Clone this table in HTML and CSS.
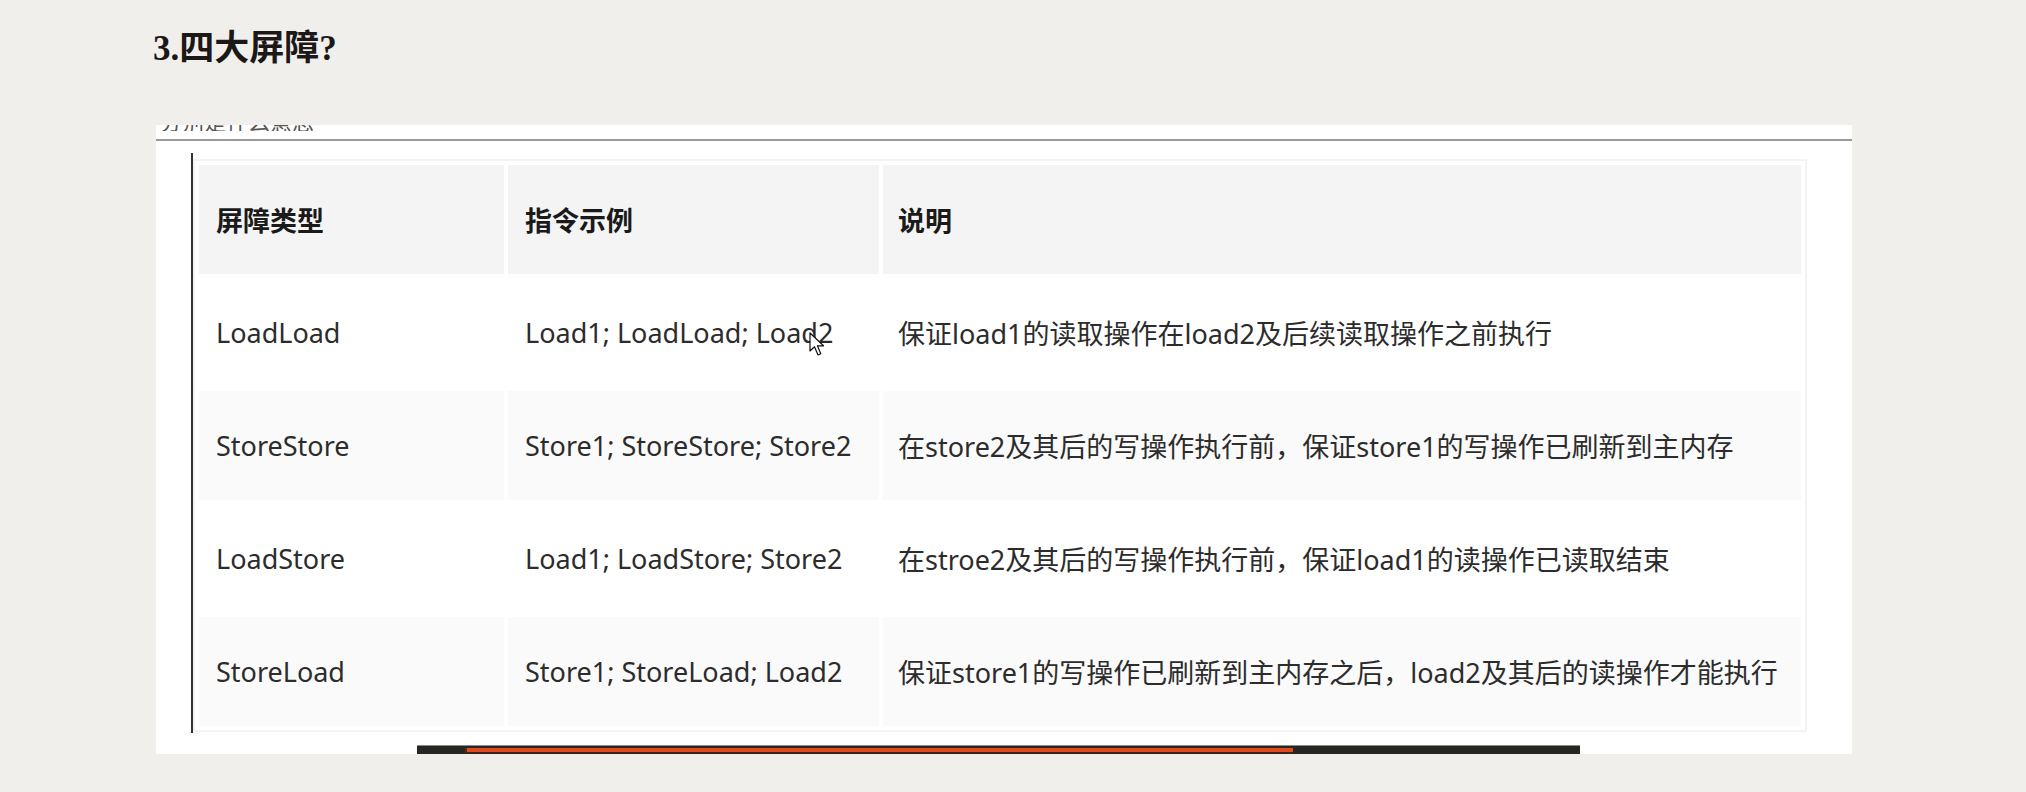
FILE: index.html
```html
<!DOCTYPE html>
<html>
<head>
    <meta charset="utf-8">
    <title>四大屏障</title>
    <link rel="stylesheet" href="styles.css">
</head>
<body>
    <h3 class="section-title">3.四大屏障?</h3>

    <div class="shot">
        <div class="cut-line">
            <span>分别是什么意思</span>
        </div>
        <div class="rule"></div>

        <blockquote class="quote">
            <table class="barrier-table">
                <colgroup>
                    <col class="col-type">
                    <col class="col-code">
                    <col class="col-desc">
                </colgroup>
                <thead>
                    <tr>
                        <th>屏障类型</th>
                        <th>指令示例</th>
                        <th>说明</th>
                    </tr>
                </thead>
                <tbody>
                    <tr>
                        <td>LoadLoad</td>
                        <td>Load1; LoadLoad; Load2</td>
                        <td>保证load1的读取操作在load2及后续读取操作之前执行</td>
                    </tr>
                    <tr>
                        <td>StoreStore</td>
                        <td>Store1; StoreStore; Store2</td>
                        <td>在store2及其后的写操作执行前，保证store1的写操作已刷新到主内存</td>
                    </tr>
                    <tr>
                        <td>LoadStore</td>
                        <td>Load1; LoadStore; Store2</td>
                        <td>在stroe2及其后的写操作执行前，保证load1的读操作已读取结束</td>
                    </tr>
                    <tr>
                        <td>StoreLoad</td>
                        <td>Store1; StoreLoad; Load2</td>
                        <td>保证store1的写操作已刷新到主内存之后，load2及其后的读操作才能执行</td>
                    </tr>
                </tbody>
            </table>
        </blockquote>

        <div class="player-bar">
            <div class="player-progress"></div>
        </div>
    </div>

    <svg class="mouse-cursor" width="16" height="25" viewBox="0 0 16 25">
        <path d="M1 1 L1 19 L5.5 14.8 L9 23 L11.8 21.8 L8.4 13.8 L14.5 13.8 Z" fill="#ffffff" stroke="#111111" stroke-width="1.2" stroke-linejoin="round"/>
    </svg>
</body>
</html>
```

FILE: styles.css
```css
body {
    margin: 0;
    background-color: #f0efeb;
    position: relative;
    height: 792px;
    overflow: hidden;
}

.section-title {
    margin: 0;
    padding: 28px 0 0 153px;
    font-family: 'Liberation Serif', 'Noto Sans CJK SC', serif;
    font-size: 35px;
    line-height: 42px;
    font-weight: bold;
    color: #1c1818;
}

/* screenshot pasted into the note */
.shot {
    margin: 55px 0 0 156px;
    width: 1696px;
    height: 629px;
    background-color: #ffffff;
    overflow: hidden;
}

.cut-line {
    height: 6px;
    overflow: hidden;
    padding-left: 4px;
}

.cut-line span {
    display: block;
    margin-top: -16px;
    font-family: 'Noto Sans CJK SC', sans-serif;
    font-size: 22px;
    line-height: 22px;
    color: #555555;
}

.rule {
    margin-top: 8px;
    border-top: 2px solid #9a9a9a;
}

.quote {
    margin: 12px 0 0 35px;
    padding: 6px 0 1px 0;
    border-left: 2px solid #333333;
}

.barrier-table {
    border: 2px solid #f3f3f3;
    border-spacing: 4px;
    table-layout: fixed;
    font-family: 'Noto Sans', 'Noto Sans CJK SC', sans-serif;
    font-size: 27px;
    color: #2c2c2c;
}

.col-type {
    width: 305px;
}

.col-code {
    width: 371px;
}

.col-desc {
    width: 918px;
}

.barrier-table th,
.barrier-table td {
    height: 109px;
    padding: 0 0 0 17px;
    text-align: left;
    vertical-align: middle;
    white-space: nowrap;
    box-sizing: border-box;
}

.barrier-table th {
    background-color: #f4f4f4;
    font-weight: bold;
    color: #1a1a1a;
}

.barrier-table td:last-child,
.barrier-table th:last-child {
    padding-left: 15px;
}

.barrier-table tbody tr:nth-child(even) td {
    background-color: #fafafa;
}

/* video player strip at the bottom of the screenshot */
.player-bar {
    margin: 12px 0 0 261px;
    width: 1163px;
    height: 12px;
    background-color: #262622;
    border-top: 1px solid #8a8a86;
}

.player-progress {
    margin: 2px 0 0 48px;
    width: 826px;
    height: 4px;
    background-color: #e04a1c;
    border-left: 2px solid #5a2a18;
    border-bottom: 1px solid #4a2214;
}

.mouse-cursor {
    position: absolute;
    left: 809px;
    top: 332px;
}
```
